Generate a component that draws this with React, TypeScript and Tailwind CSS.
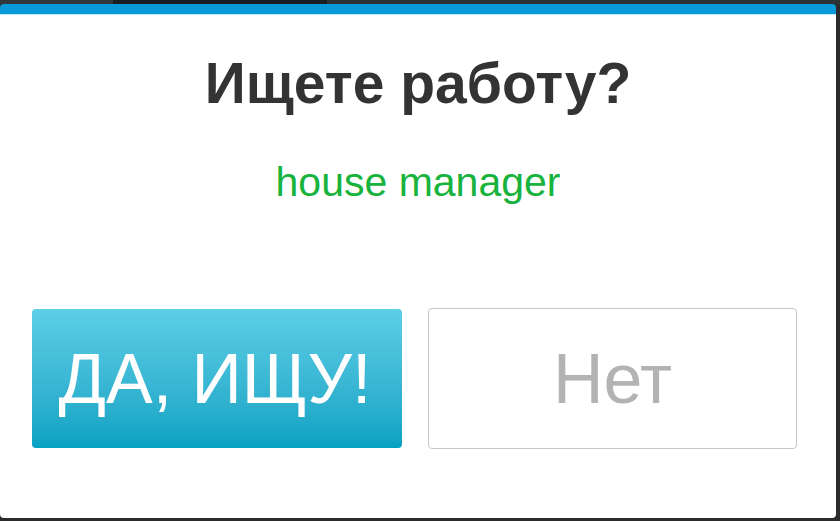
import React from 'react';

const font = { fontFamily: '"Liberation Sans", Arial, sans-serif' };

export default function App() {
  return (
    <div className="w-[840px] h-[521px] bg-[#2b2b2b] overflow-hidden" style={font}>
      {/* top strip of the page behind the dialog */}
      <div className="flex h-[4px]">
        <div className="w-[113px] bg-[#33363a]" />
        <div className="w-[214px] bg-[#1a1e24]" />
        <div className="flex-1 bg-[#2e3134]" />
      </div>

      {/* dialog */}
      <div className="w-[836px] h-[514px] bg-white border-t-[10px] border-[#0a9ad9] rounded-[4px] flex flex-col items-center">
        <div className="h-px w-full bg-[#bfeaf8]" />
        <h1 className="mt-[40px] text-[57px] leading-none font-bold text-[#333333] text-center">
          Ищете работу?
        </h1>
        <p className="mt-[50px] text-[41px] leading-none text-[#17b33d] text-center">
          house manager
        </p>

        <div className="mt-[106px] self-start ml-[32px] flex gap-[26px]">
          <button className="w-[370px] h-[139px] pr-[4px] rounded-[4px] bg-gradient-to-b from-[#5ccfe7] to-[#04a2c3] flex items-center justify-center text-white text-[70px] leading-none">
            ДА, ИЩУ!
          </button>
          <button className="w-[369px] h-[141px] -mt-px rounded-[4px] border border-[#c8c8c8] bg-white flex items-center justify-center text-[#b3b3b3] text-[70px] leading-none">
            Нет
          </button>
        </div>
      </div>
    </div>
  );
}
